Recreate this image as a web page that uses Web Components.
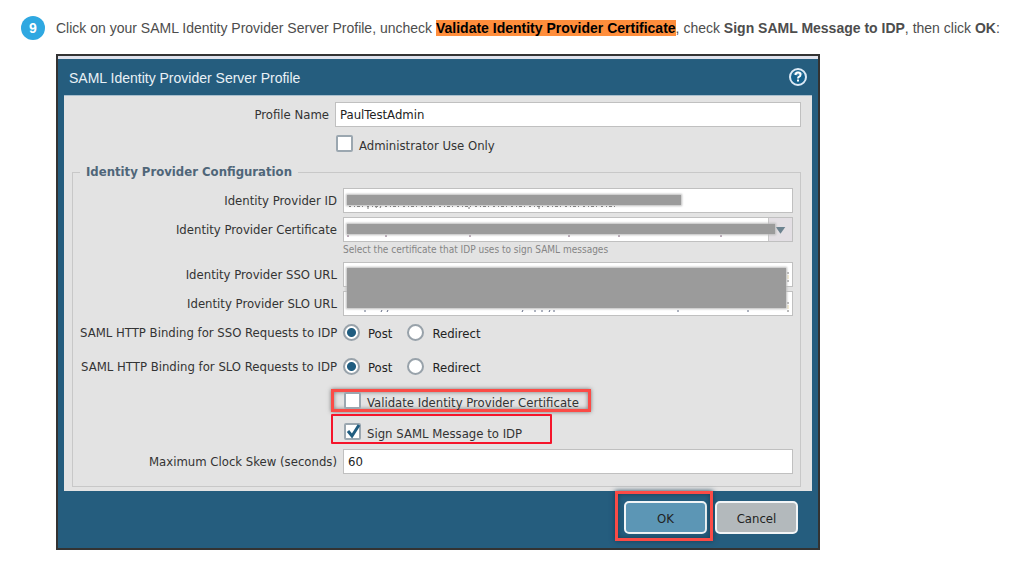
<!DOCTYPE html>
<html lang="en">
<head>
<meta charset="utf-8">
<title>SAML Identity Provider Server Profile</title>
<style>
  body {
    margin: 0;
    background: #fff;
    color: #4d4d4d;
    font: 14px/24px "Liberation Sans", Arial, sans-serif;
  }
  mark { background: #ff8e3c; color: #000; font-weight: bold; }
</style>
</head>
<body>

<guide-step number="9">
  <span slot="text">Click on your SAML Identity Provider Server Profile, uncheck <mark>Validate Identity Provider Certificate</mark>, check <b>Sign SAML Message to IDP</b>, then click <b>OK</b>:</span>

  <profile-dialog heading="SAML Identity Provider Server Profile">
    <field-row label="Profile Name" value="PaulTestAdmin"></field-row>
    <check-option class="admin" label="Administrator Use Only"></check-option>

    <field-group heading="Identity Provider Configuration">
      <field-row label="Identity Provider ID" redact="part"></field-row>
      <field-row label="Identity Provider Certificate" type="select" redact="most"
        hint="Select the certificate that IDP uses to sign SAML messages"></field-row>
      <redacted-rows>
        <field-row label="Identity Provider SSO URL"></field-row>
        <field-row label="Identity Provider SLO URL"></field-row>
      </redacted-rows>
      <binding-row class="first" label="SAML HTTP Binding for SSO Requests to IDP"></binding-row>
      <binding-row class="second" label="SAML HTTP Binding for SLO Requests to IDP"></binding-row>
      <call-out class="validate"><check-option label="Validate Identity Provider Certificate"></check-option></call-out>
      <call-out class="sign" thin><check-option label="Sign SAML Message to IDP" checked></check-option></call-out>
      <field-row label="Maximum Clock Skew (seconds)" value="60"></field-row>
    </field-group>

    <dialog-button slot="actions" label="OK" primary></dialog-button>
    <dialog-button slot="actions" label="Cancel"></dialog-button>
  </profile-dialog>
</guide-step>

<script>
  // numbered step of the guide: badge, sentence, then the illustration
  class GuideStep extends HTMLElement {
    constructor() {
      super();
      this.attachShadow({mode: 'open'}).innerHTML = `
        <style>
          :host {
            display: grid;
            grid-template-columns: 24px 1fr;
            column-gap: 11px;
            row-gap: 14px;
            padding: 16px 5px 16px 21px;
          }
          .badge {
            height: 24px;
            border-radius: 50%;
            background: #2fa8e1;
            color: #fff;
            font-weight: bold;
            text-align: center;
          }
          .body { grid-column: 2; }
        </style>
        <span class="badge">${this.getAttribute('number')}</span>
        <slot name="text"></slot>
        <div class="body"><slot></slot></div>
      `;
    }
  }

  class ProfileDialog extends HTMLElement {
    constructor() {
      super();
      this.attachShadow({mode: 'open'}).innerHTML = `
        <style>
          :host {
            display: block;
            box-sizing: border-box;
            width: 80%;
            border: 2px solid #333;
            background: #255d7e;
            color: #333;
            font: 13px/17px "DejaVu Sans Condensed", "Noto Sans", sans-serif;
          }
          header {
            display: flex;
            align-items: center;
            justify-content: space-between;
            height: 36px;
            padding: 0 11px;
            border-top: 3px solid #dfe2ec;
          }
          h1 {
            margin: 0;
            padding-top: 2px;
            color: #e9f1f6;
            font: 14px/20px "Liberation Sans", Arial, sans-serif;
          }
          .help { padding: 0; border: 0; background: none; line-height: 0; }
          main {
            margin: 0 6px;
            padding: 6px 11px 4px 8px;
            border-top: 1px solid #a9bfcd;
            background: #e3e3e3;
          }
          footer {
            display: flex;
            justify-content: flex-end;
            gap: 8px;
            padding: 10px 20px 14px;
          }
          ::slotted(.admin) { margin: 8px 0 13px 264px; }
        </style>
        <header>
          <h1>${this.getAttribute('heading')}</h1>
          <button class="help" aria-label="Help">
            <svg width="18" height="18" viewBox="0 0 18 18">
              <circle cx="9" cy="9" r="8" fill="#17628d" stroke="#dce9f5" stroke-width="2"/>
              <path d="M4 6a6 6 0 0 1 10 0q-5 3-10 0z" fill="#4d8cb0"/>
              <path d="M6.500 7q0-2.500 2.500-2.500t2.500 2.200q0 1.300-1.300 2-1.200.6-1.200 1.800" fill="none" stroke="#fff" stroke-width="2"/>
              <rect x="8" y="11.500" width="2" height="2" fill="#fff"/>
            </svg>
          </button>
        </header>
        <main><slot></slot></main>
        <footer><slot name="actions"></slot></footer>
      `;
    }
  }

  class FieldGroup extends HTMLElement {
    constructor() {
      super();
      this.attachShadow({mode: 'open'}).innerHTML = `
        <style>
          :host { display: block; }
          fieldset {
            min-width: 0;
            margin: 0;
            padding: 9px 7px 12px;
            border: 1px solid #c8c8c8;
          }
          legend {
            padding: 0 6px;
            color: #4f6679;
            font-weight: bold;
            line-height: 14px;
          }
          .rows { display: flex; flex-direction: column; gap: 4px; }
          ::slotted(.first) { margin-top: 4px; }
          ::slotted(.second) { margin-top: 13px; }
          ::slotted(call-out) { margin-left: 251px; }
          ::slotted(.validate) { margin-top: 10px; }
          ::slotted(.sign) { margin-top: -2px; margin-bottom: 1px; }
        </style>
        <fieldset>
          <legend>${this.getAttribute('heading')}</legend>
          <div class="rows"><slot></slot></div>
        </fieldset>
      `;
    }
  }

  // label + text box or drop-down, optionally blanked out by a grey bar
  class FieldRow extends HTMLElement {
    constructor() {
      super();
      let label = this.getAttribute('label');
      let value = this.getAttribute('value') || '';
      let hint = this.getAttribute('hint');
      let redact = this.getAttribute('redact');
      let isSelect = this.getAttribute('type') === 'select';

      let control = isSelect
        ? `<select id="control"><option></option></select>
           <svg class="arrow" viewBox="0 0 24 23"><path d="M7 9h10l-5 7z" fill="#6d8390"/></svg>`
        : `<input id="control" type="text" value="${value}">`;

      this.attachShadow({mode: 'open'}).innerHTML = `
        <style>
          :host {
            display: grid;
            grid-template-columns: 257px 1fr;
            column-gap: 6px;
          }
          label { text-align: right; line-height: 25px; white-space: nowrap; }
          .control { position: relative; height: 25px; }
          input, select {
            box-sizing: border-box;
            display: block;
            width: 100%;
            height: 25px;
            margin: 0;
            padding: 0 4px;
            border: 1px solid #c0c0c0;
            border-radius: 0;
            background: #fff;
            color: #222;
            font: inherit;
            appearance: none;
          }
          .arrow {
            position: absolute;
            top: 1px;
            right: 1px;
            width: 23px;
            height: 23px;
            border-left: 1px solid #c8c8c8;
            background: #e3dfe4;
            pointer-events: none;
          }
          .bar {
            position: absolute;
            top: 7px;
            left: 4px;
            height: 10px;
            background: #9b9b9b;
            box-shadow: 0 0 2px 1px #bbb;
          }
          .bar.part { right: 25%; }
          .bar.most { right: 18px; }
          .specks { position: absolute; top: 17px; left: 4px; }
          .hint { grid-column: 2; color: #858585; font-size: 10px; line-height: 16px; }
        </style>
        <label for="control">${label}</label>
        <div class="control">
          ${control}
          ${redact ? this.specks(redact) + `<div class="bar ${redact}"></div>` : ''}
        </div>
        ${hint ? `<div class="hint">${hint}</div>` : ''}
      `;
    }

    // bits of ink left showing under the bar
    specks(kind) {
      return kind === 'part'
        ? `<svg class="specks" width="270" height="5">
             <path d="M2 1.500H268" stroke="#666" stroke-dasharray="2 3 1 2 3 2 1 4"/>
             <path d="M21 2v2M29 3l1-2M33 3l1-2M122 2v2M192 2v2" stroke="#777"/>
           </svg>`
        : `<svg class="specks" width="400" height="4">
             <path d="M1 1v2M39 1v2M123 1v2M222 1v2M272 1v2M374 1v2" stroke="#75506f"/>
           </svg>`;
    }
  }

  // two URL rows sharing one big grey block
  class RedactedRows extends HTMLElement {
    constructor() {
      super();
      this.attachShadow({mode: 'open'}).innerHTML = `
        <style>
          :host { display: flex; flex-direction: column; gap: 4px; position: relative; }
          .block {
            position: absolute;
            top: 6px;
            bottom: 8px;
            left: 267px;
            right: 7px;
            background: #9b9b9b;
            box-shadow: 0 0 2px 1px #bbb;
          }
          svg { position: absolute; bottom: 3px; left: 267px; }
          .edge { bottom: 4px; left: auto; right: 4px; }
        </style>
        <slot></slot>
        <svg width="440" height="5">
          <path d="M18 2v2M34 4l1-2M40 4l1-2M175 4l1-2M188 2v2M195 2v2M202 4l1-2M207 2v2M331 2v2M401 2v2" stroke="#5d6680"/>
        </svg>
        <svg class="edge" width="2" height="42">
          <path d="M1 2v2M1 10v2M1 32v2M1 40v2" stroke="#777"/>
          <path d="M1 5v4M1 35v4" stroke="#ead9a8"/>
        </svg>
        <div class="block"></div>
      `;
    }
  }

  class BindingRow extends HTMLElement {
    constructor() {
      super();
      let label = this.getAttribute('label');
      this.attachShadow({mode: 'open'}).innerHTML = `
        <style>
          :host {
            display: grid;
            grid-template-columns: 257px 1fr;
            column-gap: 6px;
          }
          .name { text-align: right; white-space: nowrap; }
          .options { display: flex; gap: 15px; }
          label { display: flex; gap: 8px; color: #222; line-height: 19px; height: 17px; }
          input {
            appearance: none;
            box-sizing: border-box;
            width: 17px;
            height: 17px;
            margin: 0;
            border: 2px solid #98a2aa;
            border-radius: 50%;
            background: #fff;
          }
          input:checked { background: radial-gradient(circle, #205d80 4px, #fff 5px); }
        </style>
        <span class="name" id="name">${label}</span>
        <div class="options" role="radiogroup" aria-labelledby="name">
          <label><input type="radio" name="binding" checked>Post</label>
          <label><input type="radio" name="binding">Redirect</label>
        </div>
      `;
    }
  }

  class CheckOption extends HTMLElement {
    constructor() {
      super();
      let checked = this.hasAttribute('checked');
      this.attachShadow({mode: 'open'}).innerHTML = `
        <style>
          :host { display: block; height: 17px; }
          label {
            display: inline-flex;
            gap: 6px;
            position: relative;
            color: #333;
            line-height: 21px;
            height: 17px;
            white-space: nowrap;
          }
          input {
            appearance: none;
            box-sizing: border-box;
            width: 17px;
            height: 17px;
            margin: 0;
            border: 2px solid #9ba7b0;
            border-radius: 2px;
            background: #fff;
          }
          svg { position: absolute; top: 0; left: 0; }
        </style>
        <label>
          <input type="checkbox" ${checked ? 'checked' : ''}>
          ${checked ? '<svg width="17" height="17"><path d="M4 8l4 5 7-11" fill="none" stroke="#205d80" stroke-width="3"/></svg>' : ''}
          ${this.getAttribute('label')}
        </label>
      `;
    }
  }

  // red frame round an option
  class CallOut extends HTMLElement {
    constructor() {
      super();
      this.attachShadow({mode: 'open'}).innerHTML = `
        <style>
          :host {
            display: block;
            box-sizing: border-box;
            width: 260px;
            padding: 0 10px;
            border: 3px solid #fb4b46;
            box-shadow: 0 0 4px #777, inset 0 0 4px #777;
          }
          :host([thin]) {
            width: 221px;
            padding: 7px 11px 2px;
            border: 2px solid #f5152b;
            border-radius: 1px;
            box-shadow: none;
          }
        </style>
        <slot></slot>
      `;
    }
  }

  class DialogButton extends HTMLElement {
    constructor() {
      super();
      this.attachShadow({mode: 'open'}).innerHTML = `
        <style>
          :host { display: block; position: relative; }
          button {
            width: 83px;
            height: 33px;
            padding: 2px 0 0;
            border: 2px solid #f2f5f7;
            border-radius: 5px;
            background: #b3b9bc;
            color: #222;
            font: inherit;
          }
          :host([primary]) button { background: #5c96b5; }
          :host([primary])::before {
            content: "";
            position: absolute;
            inset: -10px -6px -7px -9px;
            border: 3px solid #fb4b46;
            box-shadow: 0 0 5px #183e54, inset 0 0 5px #183e54;
            pointer-events: none;
          }
        </style>
        <button type="button">${this.getAttribute('label')}</button>
      `;
    }
  }

  customElements.define('guide-step', GuideStep);
  customElements.define('profile-dialog', ProfileDialog);
  customElements.define('field-group', FieldGroup);
  customElements.define('field-row', FieldRow);
  customElements.define('redacted-rows', RedactedRows);
  customElements.define('binding-row', BindingRow);
  customElements.define('check-option', CheckOption);
  customElements.define('call-out', CallOut);
  customElements.define('dialog-button', DialogButton);
</script>
</body>
</html>
